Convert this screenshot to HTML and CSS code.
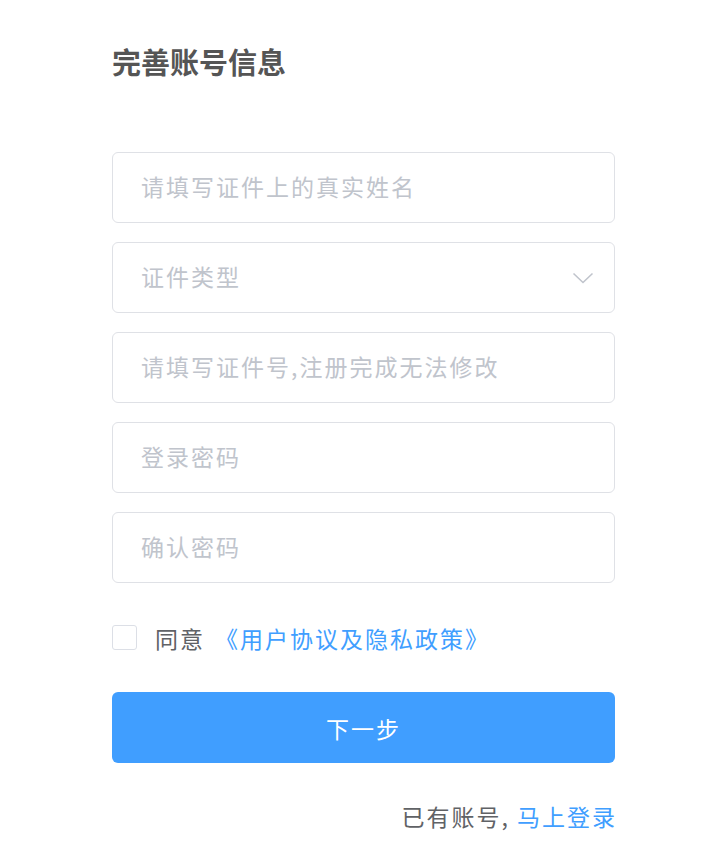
FILE: index.html
```html
<!DOCTYPE html>
<html lang="zh-CN">
<head>
<meta charset="utf-8">
<title>完善账号信息</title>
<link rel="stylesheet" href="styles.css">
</head>
<body>
<div class="page">
  <h1 class="title">完善账号信息</h1>
  <form class="form">
    <div class="field"><input class="input" type="text" placeholder="请填写证件上的真实姓名"></div>
    <div class="field select">
      <input class="input" type="text" placeholder="证件类型" readonly>
      <svg class="chevron" width="22" height="12" viewBox="0 0 22 12"><path d="M1.5 1.5 L11 10.5 L20.5 1.5" fill="none" stroke="#c0c4cc" stroke-width="1.6"/></svg>
    </div>
    <div class="field"><input class="input" type="text" placeholder="请填写证件号,注册完成无法修改"></div>
    <div class="field"><input class="input" type="text" placeholder="登录密码"></div>
    <div class="field"><input class="input" type="text" placeholder="确认密码"></div>
    <label class="agree">
      <span class="checkbox"></span>
      <span class="agree-text">同意</span>
      <a class="link" href="#">《用户协议及隐私政策》</a>
    </label>
    <button class="btn" type="button">下一步</button>
    <p class="login">已有账号, <a class="link" href="#">马上登录</a></p>
  </form>
</div>
</body>
</html>
```

FILE: styles.css
```css
* { box-sizing: border-box; }
html, body { margin: 0; padding: 0; background: #fff; }
body {
  font-family: "Noto Sans CJK SC", "Noto Sans", "Liberation Sans", sans-serif;
  color: #606266;
}
.page {
  width: 503px;
  margin-left: 112px;
  display: flex;
  flex-direction: column;
}
.title {
  margin: 45px 0 0;
  font-size: 29px;
  line-height: 32px;
  font-weight: 700;
  color: #555;
}
.form {
  margin-top: 75px;
  display: flex;
  flex-direction: column;
}
.field {
  position: relative;
  height: 71px;
  margin-bottom: 19px;
}
.input {
  width: 100%;
  height: 71px;
  border: 1.5px solid #dfe1e6;
  border-radius: 6px;
  padding: 0 28px 3px;
  font-family: inherit;
  font-size: 23px;
  letter-spacing: 2px;
  color: #606266;
  outline: none;
  background: #fff;
}
.input::placeholder { color: #c0c4cc; }
.chevron {
  position: absolute;
  right: 21px;
  top: 30px;
}
.agree {
  margin-top: 23px;
  height: 25px;
  display: flex;
  align-items: center;
  font-size: 23px;
  letter-spacing: 2px;
}
.checkbox {
  width: 25px;
  height: 25px;
  border: 1.5px solid #dcdfe6;
  border-radius: 3px;
  background: #fff;
}
.agree-text {
  margin-left: 18px;
  color: #606266;
}
.link {
  color: #409eff;
  text-decoration: none;
}
.agree .link { margin-left: 10px; }
.btn {
  margin-top: 42px;
  height: 71px;
  border: none;
  border-radius: 6px;
  background: #409eff;
  color: #fff;
  font-family: inherit;
  font-size: 23px;
  letter-spacing: 2px;
  cursor: pointer;
}
.login {
  margin: 38px -2px 0 0;
  line-height: 30px;
  font-size: 23px;
  letter-spacing: 2px;
  text-align: right;
  color: #606266;
}
```
